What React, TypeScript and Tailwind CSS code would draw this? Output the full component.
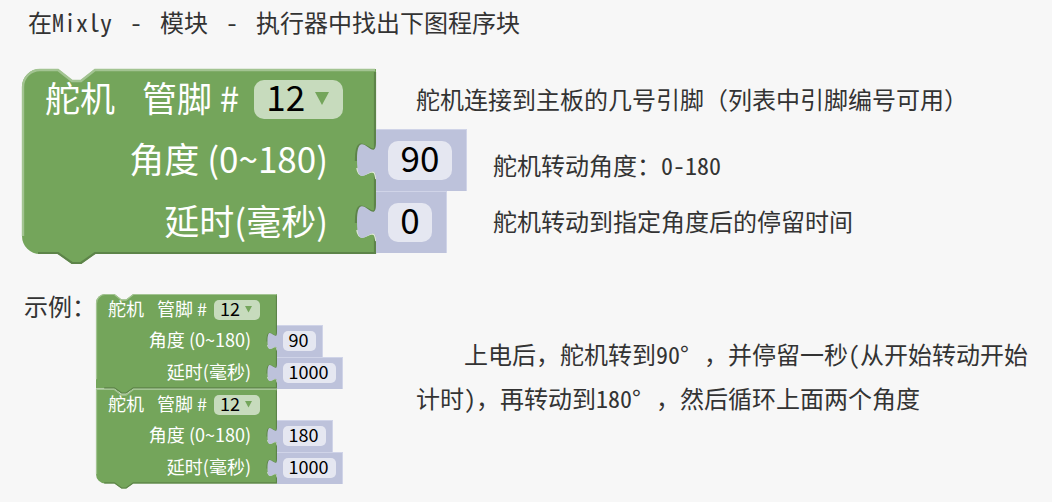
import React from "react";

type Size = "lg" | "sm";

type BlockProps = {
  size: Size;
  angle: string;
  delay: string;
  joinTop?: boolean;
  joinBottom?: boolean;
};

const styles = {
  lg: {
    block: "w-[354px] text-[35px]",
    svg: "h-[196px] w-[360px]",
    head: "h-[60px] pl-[23px]",
    row: "h-[62px]",
    text: "pb-[5px]",
    label: "pr-12",
    gap: "mr-[27px]",
    pin: "mr-[15px]",
    select: "h-[39px] w-[89px] rounded-[10px] pl-3 pb-2",
    arrow: "right-[14px] top-3 h-[14px] w-[14px]",
    value: "pl-3 pr-[14px]",
    tab: "h-[38px] w-[22px] -left-5 top-3",
    pill: "h-[39px] rounded-[10px] pb-2",
  },
  sm: {
    block: "w-[181px] text-[18px]",
    svg: "h-[100px] w-[184px]",
    head: "h-[31px] pl-[12px]",
    row: "h-[32px]",
    text: "pb-1",
    label: "pr-[26px]",
    gap: "mr-[13px]",
    pin: "mr-[7px]",
    select: "h-5 w-[46px] rounded-[5px] pl-[6px] pb-1",
    arrow: "right-[8px] top-[6px] h-[7px] w-[7px]",
    value: "px-[6px] pb-[2px]",
    tab: "h-[19px] w-[11px] -left-[10px] top-[6px]",
    pill: "h-5 rounded-[5px] pb-1 pr-[2px]",
  },
};

const widths: Record<Size, Record<number, string>> = {
  lg: { 1: "w-[44px]", 2: "w-[64px]", 3: "w-[84px]", 4: "w-[104px]" },
  sm: { 1: "w-[23px]", 2: "w-[33px]", 3: "w-[43px]", 4: "w-[53px]" },
};

function BlockShape({ size, joinTop, joinBottom }: { size: Size; joinTop?: boolean; joinBottom?: boolean }) {
  const start = joinTop ? "M0 0" : "M0 18 A18 18 0 0 1 18 0";
  const end = joinBottom ? "L0 185" : "H18 A18 18 0 0 1 0 167";
  const top = joinTop ? "M1 167 V1" : "M1 167 V18 A17 17 0 0 1 18 1";
  return (
    <svg
      className={"pointer-events-none absolute left-0 top-0 overflow-visible " + styles[size].svg}
      viewBox="0 0 360 196"
      preserveAspectRatio="none"
      aria-hidden="true"
    >
      <path d={`${start} H36 L50 11 H59 L73 0 H354 V185 H73 L59 195 H50 L36 185 ${end} Z`} fill="#74a55b" />
      <path d={`${top} H36 L50 12 H59 L73 1 H353`} fill="none" stroke="#a3c492" strokeWidth="2.4" />
      <path d="M353 3 V184 H73 L59 194 H50 L36 184 H16" fill="none" stroke="#5d8449" strokeWidth="2.2" />
    </svg>
  );
}

function ValueBlock({ size, name, value }: { size: Size; name: string; value: string }) {
  const s = styles[size];
  return (
    <div
      className={
        "relative flex h-full shrink-0 items-center border-r border-t border-[#d0d4e8] bg-[#bdc2db] " + s.value
      }
    >
      <svg className={"absolute overflow-visible " + s.tab} viewBox="0 0 22 38" aria-hidden="true">
        <path d="M20 0 C20 24 0 -19 0 19" fill="none" stroke="#5d8449" strokeWidth="2.4" />
        <path d="M1 26 C3 38 11 31 15 30 S19 32 20 37" fill="none" stroke="#dfe9d9" strokeWidth="1.6" />
        <path d="M20 0 C20 24 1 -19 1 18 S20 13 20 38 H23 V0 Z" fill="#bdc2db" />
      </svg>
      <label className={"relative flex items-center bg-[#e5e7f1] " + s.pill + " " + widths[size][value.length]}>
        <input
          aria-label={name}
          defaultValue={value}
          className="w-full min-w-0 bg-transparent p-0 text-center leading-none text-black outline-none"
        />
      </label>
    </div>
  );
}

function ServoBlock({ size, angle, delay, joinTop, joinBottom }: BlockProps) {
  const s = styles[size];
  return (
    <div className={"relative shrink-0 whitespace-pre leading-none text-white " + s.block}>
      <BlockShape size={size} joinTop={joinTop} joinBottom={joinBottom} />
      <div className={"relative flex items-center " + s.head}>
        <span className={s.text + " " + s.gap}>舵机</span>
        <span className={s.text + " " + s.pin}>管脚 #</span>
        <label className={"relative flex items-center bg-[#c7dbbd] " + s.select}>
          <select
            aria-label="管脚"
            className="w-full appearance-none bg-transparent p-0 leading-none text-black outline-none"
          >
            <option>12</option>
          </select>
          <svg className={"pointer-events-none absolute " + s.arrow} viewBox="0 0 14 14" aria-hidden="true">
            <path d="M0 0 H14 L7 13 Z" fill="#74a55b" />
          </svg>
        </label>
      </div>
      <div className={"relative flex items-center " + s.row}>
        <span className={"w-full shrink-0 text-right " + s.text + " " + s.label}>角度 (0~180)</span>
        <ValueBlock size={size} name="角度" value={angle} />
      </div>
      <div className={"relative flex items-center " + s.row}>
        <span className={"w-full shrink-0 text-right " + s.text + " " + s.label}>延时(毫秒)</span>
        <ValueBlock size={size} name="延时" value={delay} />
      </div>
    </div>
  );
}

function Wide({ children }: { children: React.ReactNode }) {
  return <span className="inline-block w-6 indent-0">{children}</span>;
}

export default function App() {
  return (
    <main className="min-h-screen bg-[#f7f7f7] pt-1 font-['Noto_Sans_CJK_SC',sans-serif] text-[#333]">
      <div className="font-['Noto_Sans_Mono_CJK_SC','Noto_Sans_CJK_SC',monospace] text-2xl">
        <h1 className="whitespace-pre pl-7 leading-9">
          在Mixly <span className="inline-block w-6 text-center">-</span> 模块{" "}
          <span className="inline-block w-6 text-center">-</span> 执行器中找出下图程序块
        </h1>

        <section className="mt-[29px] flex pl-[22px]">
          <div className="font-['Noto_Sans_CJK_SC',sans-serif]">
            <ServoBlock size="lg" angle="90" delay="0" />
          </div>
          <div className="pl-10 leading-9">
            <p className="mt-3">舵机连接到主板的几号引脚（列表中引脚编号可用）</p>
            <p className="ml-[77px] mt-[30px]">舵机转动角度：0-180</p>
            <p className="ml-[77px] mt-5">舵机转动到指定角度后的停留时间</p>
          </div>
        </section>

        <section className="mt-[41px] flex pb-3 pl-6 pr-4">
          <h2 className="w-[72px] shrink-0 leading-6">示例：</h2>
          <div className="shrink-0 font-['Noto_Sans_CJK_SC',sans-serif]">
            <ServoBlock size="sm" angle="90" delay="1000" joinBottom />
            <ServoBlock size="sm" angle="180" delay="1000" joinTop />
          </div>
          <p className="ml-[139px] mt-[38px] indent-12 leading-11">
            上电后，舵机转到90<Wide>°</Wide>，并停留一秒(从开始转动开始计时)，再转动到180<Wide>°</Wide>，然后循环上面两个角度
          </p>
        </section>
      </div>
    </main>
  );
}
